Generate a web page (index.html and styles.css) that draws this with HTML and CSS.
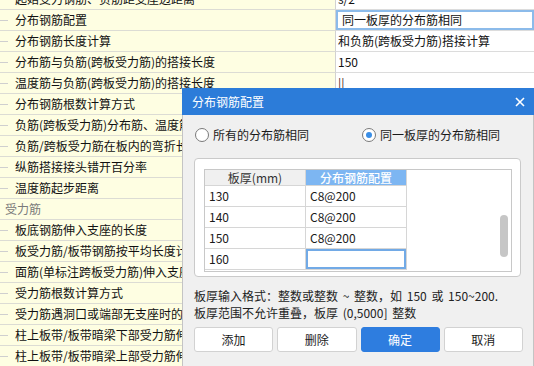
FILE: index.html
```html
<!DOCTYPE html>
<html lang="zh">
<head>
<meta charset="utf-8">
<link rel="stylesheet" href="styles.css">
</head>
<body>
<div class="page">
  <div class="grid">
    <div class="row"><div class="name">起始受力钢筋、负筋距支座边距离</div><div class="val">s/2</div></div>
    <div class="row"><div class="name">分布钢筋配置</div><div class="val focus">同一板厚的分布筋相同</div></div>
    <div class="row"><div class="name">分布钢筋长度计算</div><div class="val">和负筋(跨板受力筋)搭接计算</div></div>
    <div class="row"><div class="name">分布筋与负筋(跨板受力筋)的搭接长度</div><div class="val">150</div></div>
    <div class="row"><div class="name">温度筋与负筋(跨板受力筋)的搭接长度</div><div class="val cursor">||</div></div>
    <div class="row"><div class="name">分布钢筋根数计算方式</div><div class="val"></div></div>
    <div class="row"><div class="name">负筋(跨板受力筋)分布筋、温度筋是否带弯钩</div><div class="val"></div></div>
    <div class="row"><div class="name">负筋/跨板受力筋在板内的弯折长度</div><div class="val"></div></div>
    <div class="row"><div class="name">纵筋搭接接头错开百分率</div><div class="val"></div></div>
    <div class="row"><div class="name">温度筋起步距离</div><div class="val"></div></div>
    <div class="row"><div class="name cat">受力筋</div><div class="val"></div></div>
    <div class="row"><div class="name">板底钢筋伸入支座的长度</div><div class="val"></div></div>
    <div class="row"><div class="name">板受力筋/板带钢筋按平均长度计算</div><div class="val"></div></div>
    <div class="row"><div class="name">面筋(单标注跨板受力筋)伸入支座的锚固长度</div><div class="val"></div></div>
    <div class="row"><div class="name">受力筋根数计算方式</div><div class="val"></div></div>
    <div class="row"><div class="name">受力筋遇洞口或端部无支座时的弯折长度</div><div class="val"></div></div>
    <div class="row"><div class="name">柱上板带/板带暗梁下部受力筋伸入支座的长度</div><div class="val"></div></div>
    <div class="row"><div class="name">柱上板带/板带暗梁上部受力筋伸入支座的长度</div><div class="val"></div></div>
  </div>

  <div class="dialog">
    <div class="titlebar">
      <span class="title">分布钢筋配置</span>
      <svg class="close" width="10" height="10" viewBox="0 0 10 10"><path d="M1 1L9 9M9 1L1 9" stroke="#fff" stroke-width="1.6" fill="none"/></svg>
    </div>
    <div class="dbody">
      <div class="radios">
        <label class="radio"><span class="circle"></span>所有的分布筋相同</label>
        <label class="radio second"><span class="circle on"></span>同一板厚的分布筋相同</label>
      </div>
      <div class="panel">
        <div class="tablewrap">
          <div class="tbl">
            <div class="th th1">板厚(mm)</div><div class="th th2">分布钢筋配置</div>
            <div class="td">130</div><div class="td">C8@200</div>
            <div class="td">140</div><div class="td">C8@200</div>
            <div class="td">150</div><div class="td">C8@200</div>
            <div class="td">160</div><div class="td sel"></div>
          </div>
          <div class="spacer"></div>
          <div class="track"><div class="thumb"></div></div>
        </div>
      </div>
      <div class="help">
        <div>板厚输入格式：整数或整数 ~ 整数，如 150 或 150~200.</div>
        <div>板厚范围不允许重叠，板厚 (0,5000] 整数</div>
      </div>
      <div class="buttons">
        <div class="btn">添加</div>
        <div class="btn">删除</div>
        <div class="btn primary">确定</div>
        <div class="btn">取消</div>
      </div>
    </div>
  </div>
</div>
</body>
</html>
```

FILE: styles.css
```css
html, body {
  margin: 0;
  padding: 0;
  width: 534px;
  height: 366px;
  overflow: hidden;
  background: #ffffff;
}
body {
  font-family: "Noto Sans CJK SC", "Noto Sans", sans-serif;
  font-size: 12px;
  color: #111;
}
.page {
  position: relative;
  width: 534px;
  height: 366px;
  overflow: hidden;
}
.grid {
  display: flex;
  flex-direction: column;
  margin-top: -11px;
}
.row {
  display: grid;
  grid-template-columns: 336px 1fr;
  height: 21px;
}
.name {
  position: relative;
  box-sizing: border-box;
  background: #fefee2;
  border-bottom: 1px solid #dcdcd4;
  border-right: 1px solid #d2d2d2;
  padding-left: 15px;
  line-height: 20px;
  white-space: nowrap;
  overflow: hidden;
}
.name::before {
  content: "";
  position: absolute;
  left: 0;
  top: 10px;
  width: 8px;
  height: 1px;
  background: #cfcfcf;
}
.name.cat {
  padding-left: 5px;
  color: #7a7a7a;
}
.name.cat::before { display: none; }
.val {
  box-sizing: border-box;
  border-bottom: 1px solid #dcdcdc;
  padding-left: 2px;
  line-height: 20px;
  white-space: nowrap;
  background: #fff;
}
.val.focus {
  box-shadow: inset 0 0 0 2px #8cbbea;
  padding-left: 6px;
}
.val.cursor { color: #4a2a20; }

/* dialog */
.dialog {
  position: absolute;
  left: 182px;
  top: 88px;
  width: 352px;
  display: flex;
  flex-direction: column;
}
.titlebar {
  height: 27px;
  background: #2c7cd9;
  color: #fff;
  display: flex;
  align-items: center;
  justify-content: space-between;
  padding: 0 9px 0 10px;
}
.title { font-size: 12px; }
.close { display: block; }
.dbody {
  background: #f0f0f0;
  border-left: 1px solid #c4c4c4;
  border-right: 1px solid #c4c4c4;
  padding: 13px 10px 20px 11px;
  display: flex;
  flex-direction: column;
}
.radios {
  display: flex;
  align-items: center;
  height: 14px;
  padding-left: 1px;
}
.radio {
  display: flex;
  align-items: center;
  gap: 4px;
  color: #1a1a1a;
  line-height: 14px;
}
.radio.second { margin-left: 53px; }
.circle {
  box-sizing: border-box;
  width: 14px;
  height: 14px;
  border-radius: 50%;
  border: 1px solid #7a7a7a;
  background: #fff;
  display: flex;
  align-items: center;
  justify-content: center;
}
.circle.on::after {
  content: "";
  width: 6px;
  height: 6px;
  border-radius: 50%;
  background: #3a8ee6;
}
.panel {
  margin-top: 16px;
  margin-right: 2px;
  box-sizing: border-box;
  height: 119px;
  background: #fff;
  border: 1px solid #cacaca;
  border-radius: 4px;
  padding: 10px 8px 5px 9px;
}
.tablewrap {
  box-sizing: border-box;
  height: 103px;
  border: 1px solid #c8c8c8;
  display: flex;
  overflow: hidden;
}
.tbl {
  display: grid;
  grid-template-columns: 101px 101px;
  grid-template-rows: 16px repeat(4, 21px);
  align-content: start;
}
.th, .td {
  box-sizing: border-box;
  border-right: 1px solid #d6d6d6;
  border-bottom: 1px solid #d6d6d6;
}
.th {
  text-align: center;
  line-height: 15px;
}
.th1 { background: #f0f0f0; color: #333; }
.th2 { background: #7db6f2; color: #fff; font-weight: 500; }
.td {
  padding-left: 4px;
  line-height: 20px;
  color: #1a1a1a;
}
.td.sel {
  box-shadow: inset 0 0 0 2px #72aae6;
}
.spacer { flex: 1; }
.track {
  width: 8px;
  margin-right: 3px;
}
.thumb {
  margin-top: 45px;
  height: 42px;
  border-radius: 4px;
  background: #c6c6c6;
}
.help {
  margin-top: 10px;
  line-height: 17px;
  color: #222;
  word-spacing: 2px;
}
.buttons {
  margin-top: 6px;
  display: grid;
  grid-template-columns: repeat(4, 1fr);
  gap: 4px;
}
.btn {
  box-sizing: border-box;
  height: 25px;
  border: 1px solid #d2d2d2;
  border-radius: 3px;
  background: #fff;
  text-align: center;
  line-height: 23px;
  color: #1a1a1a;
}
.btn.primary {
  background: #2e7ddf;
  border-color: #2e7ddf;
  color: #fff;
}
```
